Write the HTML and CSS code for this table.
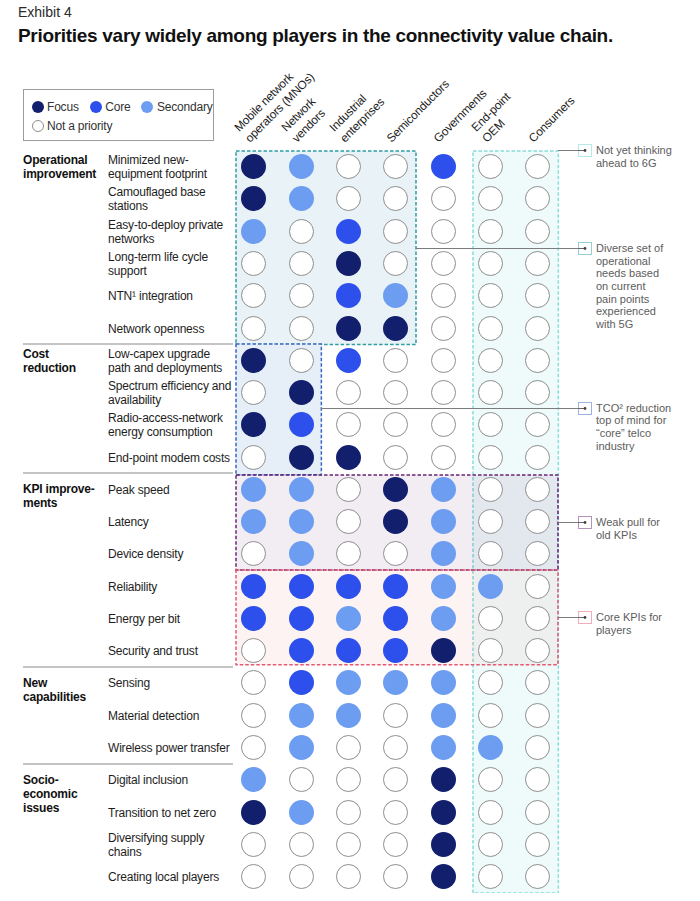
FILE: index.html
```html
<!DOCTYPE html>
<html>
<head>
<meta charset="utf-8">
<link rel="stylesheet" href="styles.css">
</head>
<body>
<div class="page">
  <div class="exhibit">Exhibit 4</div>
  <h1 class="title">Priorities vary widely among players in the connectivity value chain.</h1>

  <div class="head">
    <div class="legend">
      <div class="lg-row">
        <span class="lg-item"><span class="dot f"></span>Focus</span>
        <span class="lg-item"><span class="dot k"></span>Core</span>
        <span class="lg-item"><span class="dot s"></span>Secondary</span>
      </div>
      <div class="lg-row">
        <span class="lg-item"><span class="dot n"></span>Not a priority</span>
      </div>
    </div>
    <div class="hc"><span>Mobile network<br>operators (MNOs)</span></div>
    <div class="hc"><span>Network<br>vendors</span></div>
    <div class="hc"><span>Industrial<br>enterprises</span></div>
    <div class="hc"><span>Semiconductors</span></div>
    <div class="hc"><span>Governments</span></div>
    <div class="hc"><span>End-point<br>OEM</span></div>
    <div class="hc"><span>Consumers</span></div>
  </div>

  <div class="chart">
    <div class="layer boxes">
      <div class="bx cyan"><svg><rect width="100%" height="100%"/></svg></div>
      <div class="bx teal"><svg><rect width="100%" height="100%"/></svg></div>
      <div class="bx blue"><svg><rect width="100%" height="100%"/></svg></div>
      <div class="bx purple"><svg><rect width="100%" height="100%"/></svg></div>
      <div class="bx pink"><svg><rect width="100%" height="100%"/></svg></div>

      <div class="ann a1">
        <span class="ln"></span>
        <svg class="ic ic-cyan" width="14" height="13" viewBox="0 0 14 13"><rect x="0.5" y="0.5" width="13" height="12"/><line x1="0" y1="6.5" x2="7" y2="6.5"/><circle cx="7" cy="6.5" r="1.4"/></svg>
        <div class="tx">Not yet thinking<br>ahead to 6G</div>
      </div>
      <div class="ann a2">
        <span class="ln"></span>
        <svg class="ic ic-teal" width="14" height="13" viewBox="0 0 14 13"><rect x="0.5" y="0.5" width="13" height="12"/><line x1="0" y1="6.5" x2="7" y2="6.5"/><circle cx="7" cy="6.5" r="1.4"/></svg>
        <div class="tx">Diverse set of<br>operational<br>needs based<br>on current<br>pain points<br>experienced<br>with 5G</div>
      </div>
      <div class="ann a3">
        <span class="ln"></span>
        <svg class="ic ic-blue" width="14" height="13" viewBox="0 0 14 13"><rect x="0.5" y="0.5" width="13" height="12"/><line x1="0" y1="6.5" x2="7" y2="6.5"/><circle cx="7" cy="6.5" r="1.4"/></svg>
        <div class="tx">TCO² reduction<br>top of mind for<br>“core” telco<br>industry</div>
      </div>
      <div class="ann a4">
        <span class="ln"></span>
        <svg class="ic ic-purple" width="14" height="13" viewBox="0 0 14 13"><rect x="0.5" y="0.5" width="13" height="12"/><line x1="0" y1="6.5" x2="7" y2="6.5"/><circle cx="7" cy="6.5" r="1.4"/></svg>
        <div class="tx">Weak pull for<br>old KPIs</div>
      </div>
      <div class="ann a5">
        <span class="ln"></span>
        <svg class="ic ic-pink" width="14" height="13" viewBox="0 0 14 13"><rect x="0.5" y="0.5" width="13" height="12"/><line x1="0" y1="6.5" x2="7" y2="6.5"/><circle cx="7" cy="6.5" r="1.4"/></svg>
        <div class="tx">Core KPIs for<br>players</div>
      </div>
    </div>

    <div class="layer content">
      <div class="sec">
        <div class="sl two">Operational<br>improvement</div>
        <div class="rows">
          <div class="row"><div class="lb">Minimized new-<br>equipment footprint</div><span class="c f"></span><span class="c s"></span><span class="c n"></span><span class="c n"></span><span class="c k"></span><span class="c n"></span><span class="c n"></span></div>
          <div class="row"><div class="lb">Camouflaged base<br>stations</div><span class="c f"></span><span class="c s"></span><span class="c n"></span><span class="c n"></span><span class="c n"></span><span class="c n"></span><span class="c n"></span></div>
          <div class="row"><div class="lb">Easy-to-deploy private<br>networks</div><span class="c s"></span><span class="c n"></span><span class="c k"></span><span class="c n"></span><span class="c n"></span><span class="c n"></span><span class="c n"></span></div>
          <div class="row"><div class="lb">Long-term life cycle<br>support</div><span class="c n"></span><span class="c n"></span><span class="c f"></span><span class="c n"></span><span class="c n"></span><span class="c n"></span><span class="c n"></span></div>
          <div class="row"><div class="lb">NTN¹ integration</div><span class="c n"></span><span class="c n"></span><span class="c k"></span><span class="c s"></span><span class="c n"></span><span class="c n"></span><span class="c n"></span></div>
          <div class="row"><div class="lb">Network openness</div><span class="c n"></span><span class="c n"></span><span class="c f"></span><span class="c f"></span><span class="c n"></span><span class="c n"></span><span class="c n"></span></div>
        </div>
      </div>
      <div class="divider"></div>
      <div class="sec">
        <div class="sl two">Cost<br>reduction</div>
        <div class="rows">
          <div class="row"><div class="lb">Low-capex upgrade<br>path and deployments</div><span class="c f"></span><span class="c n"></span><span class="c k"></span><span class="c n"></span><span class="c n"></span><span class="c n"></span><span class="c n"></span></div>
          <div class="row"><div class="lb">Spectrum efficiency and<br>availability</div><span class="c n"></span><span class="c f"></span><span class="c n"></span><span class="c n"></span><span class="c n"></span><span class="c n"></span><span class="c n"></span></div>
          <div class="row"><div class="lb">Radio-access-network<br>energy consumption</div><span class="c f"></span><span class="c k"></span><span class="c n"></span><span class="c n"></span><span class="c n"></span><span class="c n"></span><span class="c n"></span></div>
          <div class="row"><div class="lb">End-point modem costs</div><span class="c n"></span><span class="c f"></span><span class="c f"></span><span class="c n"></span><span class="c n"></span><span class="c n"></span><span class="c n"></span></div>
        </div>
      </div>
      <div class="divider"></div>
      <div class="sec">
        <div class="sl">KPI improve-<br>ments</div>
        <div class="rows">
          <div class="row"><div class="lb">Peak speed</div><span class="c s"></span><span class="c s"></span><span class="c n"></span><span class="c f"></span><span class="c s"></span><span class="c n"></span><span class="c n"></span></div>
          <div class="row"><div class="lb">Latency</div><span class="c s"></span><span class="c s"></span><span class="c n"></span><span class="c f"></span><span class="c s"></span><span class="c n"></span><span class="c n"></span></div>
          <div class="row"><div class="lb">Device density</div><span class="c n"></span><span class="c s"></span><span class="c n"></span><span class="c n"></span><span class="c s"></span><span class="c n"></span><span class="c n"></span></div>
          <div class="row"><div class="lb">Reliability</div><span class="c k"></span><span class="c k"></span><span class="c k"></span><span class="c k"></span><span class="c s"></span><span class="c s"></span><span class="c n"></span></div>
          <div class="row"><div class="lb">Energy per bit</div><span class="c k"></span><span class="c k"></span><span class="c s"></span><span class="c k"></span><span class="c s"></span><span class="c n"></span><span class="c n"></span></div>
          <div class="row"><div class="lb">Security and trust</div><span class="c n"></span><span class="c k"></span><span class="c k"></span><span class="c k"></span><span class="c f"></span><span class="c n"></span><span class="c n"></span></div>
        </div>
      </div>
      <div class="divider"></div>
      <div class="sec">
        <div class="sl">New<br>capabilities</div>
        <div class="rows">
          <div class="row"><div class="lb">Sensing</div><span class="c n"></span><span class="c k"></span><span class="c s"></span><span class="c s"></span><span class="c s"></span><span class="c n"></span><span class="c n"></span></div>
          <div class="row"><div class="lb">Material detection</div><span class="c n"></span><span class="c s"></span><span class="c s"></span><span class="c n"></span><span class="c s"></span><span class="c n"></span><span class="c n"></span></div>
          <div class="row"><div class="lb">Wireless power transfer</div><span class="c n"></span><span class="c s"></span><span class="c n"></span><span class="c n"></span><span class="c s"></span><span class="c s"></span><span class="c n"></span></div>
        </div>
      </div>
      <div class="divider"></div>
      <div class="sec">
        <div class="sl">Socio-<br>economic<br>issues</div>
        <div class="rows">
          <div class="row"><div class="lb">Digital inclusion</div><span class="c s"></span><span class="c n"></span><span class="c n"></span><span class="c n"></span><span class="c f"></span><span class="c n"></span><span class="c n"></span></div>
          <div class="row"><div class="lb">Transition to net zero</div><span class="c f"></span><span class="c s"></span><span class="c n"></span><span class="c n"></span><span class="c f"></span><span class="c n"></span><span class="c n"></span></div>
          <div class="row"><div class="lb">Diversifying supply<br>chains</div><span class="c n"></span><span class="c n"></span><span class="c n"></span><span class="c n"></span><span class="c f"></span><span class="c n"></span><span class="c n"></span></div>
          <div class="row"><div class="lb">Creating local players</div><span class="c n"></span><span class="c n"></span><span class="c n"></span><span class="c n"></span><span class="c f"></span><span class="c n"></span><span class="c n"></span></div>
        </div>
      </div>
    </div>
  </div>
</div>
</body>
</html>
```

FILE: styles.css
```css
* { box-sizing: border-box; }
html, body { margin: 0; padding: 0; background: #fff; }
body {
  font-family: "Liberation Sans", Arial, sans-serif;
  color: #1e1e1e;
  width: 700px;
  overflow: hidden;
}
.page { padding-top: 3px; }

.exhibit {
  padding-left: 18px;
  font-size: 14px;
  line-height: 18px;
  height: 18px;
  color: #2a2a2a;
}
.title {
  margin: 3px 0 0 0;
  padding-left: 18px;
  font-family: "Liberation Sans Narrow", "Liberation Sans", sans-serif;
  font-weight: 700;
  font-size: 19px;
  letter-spacing: -0.3px;
  line-height: 24px;
  height: 24px;
  white-space: nowrap;
  color: #111;
}

/* header row: legend + rotated column titles */
.head {
  display: grid;
  grid-template-columns: 85px 122.33px repeat(7, 47.33px);
  height: 102.6px;
  margin-left: 23px;
}
.legend {
  grid-column: 1 / 3;
  align-self: end;
  margin-bottom: 9.6px;
  width: 191px;
  height: 52px;
  border: 1px solid #9c9c9c;
  padding: 7px 0 0 7.5px;
  font-size: 12px;
  letter-spacing: -0.2px;
  color: #333;
}
.lg-row {
  display: flex;
  gap: 11px;
  height: 19px;
  align-items: center;
}
.lg-item { display: flex; align-items: center; white-space: nowrap; }
.dot {
  width: 12px;
  height: 12px;
  border-radius: 50%;
  margin-right: 3.5px;
  flex: none;
}
.hc {
  display: flex;
  align-items: flex-end;
}
.hc span {
  display: block;
  white-space: nowrap;
  font-size: 11.8px;
  line-height: 14.5px;
  letter-spacing: -0.15px;
  color: #222;
  transform-origin: 0 100%;
  transform: rotate(-45deg);
  margin-left: 21.7px;
  margin-bottom: 5.4px;
}

/* chart: two stacked layers in one grid cell */
.chart {
  display: grid;
  margin-left: 23px;
}
.layer { grid-area: 1 / 1; }

.boxes {
  display: grid;
  grid-template-columns: 85px 122.33px repeat(7, 47.33px) 1fr;
  grid-template-rows: repeat(23, 32.27px);
}
.bx { margin: 0 3.66px 0 5.67px; }
.bx svg { display: block; width: 100%; height: 100%; overflow: visible; }
.bx rect { stroke-width: 1.5; stroke-dasharray: 3.5 2; }

.cyan { grid-column: 8 / 10; grid-row: 1 / 24; }
.cyan rect { fill: #effbfb; stroke: #86dcdc; }
.teal { grid-column: 3 / 7; grid-row: 1 / 7; }
.teal rect { fill: #e9f2f6; stroke: #2f9da3; }
.blue { grid-column: 3 / 5; grid-row: 7 / 11; margin-bottom: -1.7px; }
.blue rect { fill: #e6eef8; stroke: #3866c2; }
.purple { grid-column: 3 / 10; grid-row: 11 / 14; margin-top: 1.7px; }
.purple rect { fill: rgba(110, 40, 120, 0.09); stroke: #6b2477; }
.pink { grid-column: 3 / 10; grid-row: 14 / 17; margin-bottom: 2px; }
.pink rect { fill: rgba(230, 90, 90, 0.075); stroke: #e35b72; }

/* annotations */
.ann {
  display: flex;
  align-items: flex-start;
  align-self: start;
}
.ann .ln {
  flex: 1;
  height: 1px;
  background: #7c7c7c;
  margin-top: 6px;
}
.ic { flex: none; display: block; }
.ic rect { fill: none; stroke-width: 1; stroke-dasharray: 1 1; }
.ic line { stroke: #666; stroke-width: 1; }
.ic circle { fill: #444; }
.ic-cyan rect { stroke: #6fd3d3; }
.ic-teal rect { stroke: #2f9da3; }
.ic-blue rect { stroke: #3866c2; }
.ic-purple rect { stroke: #6b2477; }
.ic-pink rect { stroke: #e35b72; }
.ann .tx {
  flex: none;
  width: 104px;
  margin-left: 4px;
  font-size: 11px;
  line-height: 12.7px;
  color: #5d5d5d;
  white-space: nowrap;
}
.a1 { grid-column: 10 / -1; grid-row: 1 / span 2; margin-top: -6.6px; margin-left: -3.66px; }
.a2 { grid-column: 7 / -1; grid-row: 4 / span 4; margin-top: -5.5px; margin-left: -3.2px; }
.a3 { grid-column: 5 / -1; grid-row: 9 / span 3; margin-top: -7px; margin-left: -3.66px; }
.a4 { grid-column: 10 / -1; grid-row: 12 / span 2; margin-top: 10.4px; margin-left: -3.66px; }
.a5 { grid-column: 10 / -1; grid-row: 15 / span 2; margin-top: 8.6px; margin-left: -3.66px; }

/* content rows */
.content {
  display: flex;
  flex-direction: column;
}
.sec { display: flex; }
.sl {
  width: 85px;
  flex: none;
  font-weight: 700;
  font-size: 12px;
  line-height: 14px;
  letter-spacing: -0.2px;
  padding-top: 9.1px;
  color: #111;
}
.sl.two { padding-top: 2.6px; }
.rows { display: flex; flex-direction: column; }
.row {
  display: grid;
  grid-template-columns: 122.33px repeat(7, 47.33px);
  height: 32.27px;
  align-items: center;
  justify-items: center;
}
.lb {
  justify-self: start;
  font-size: 12px;
  line-height: 14px;
  letter-spacing: -0.2px;
  white-space: nowrap;
  color: #1e1e1e;
  padding-top: 1px;
}
.divider {
  width: 210px;
  height: 0;
  border-top: 2px solid #c4c4c4;
  margin: -1px 0;
  position: relative;
}

.c {
  width: 25px;
  height: 25px;
  border-radius: 50%;
}
.f { background: #121f6d; }
.k { background: #2d4fec; }
.s { background: #6d9df1; }
.n { background: #fff; border: 1px solid #8e8e8e; }
```
